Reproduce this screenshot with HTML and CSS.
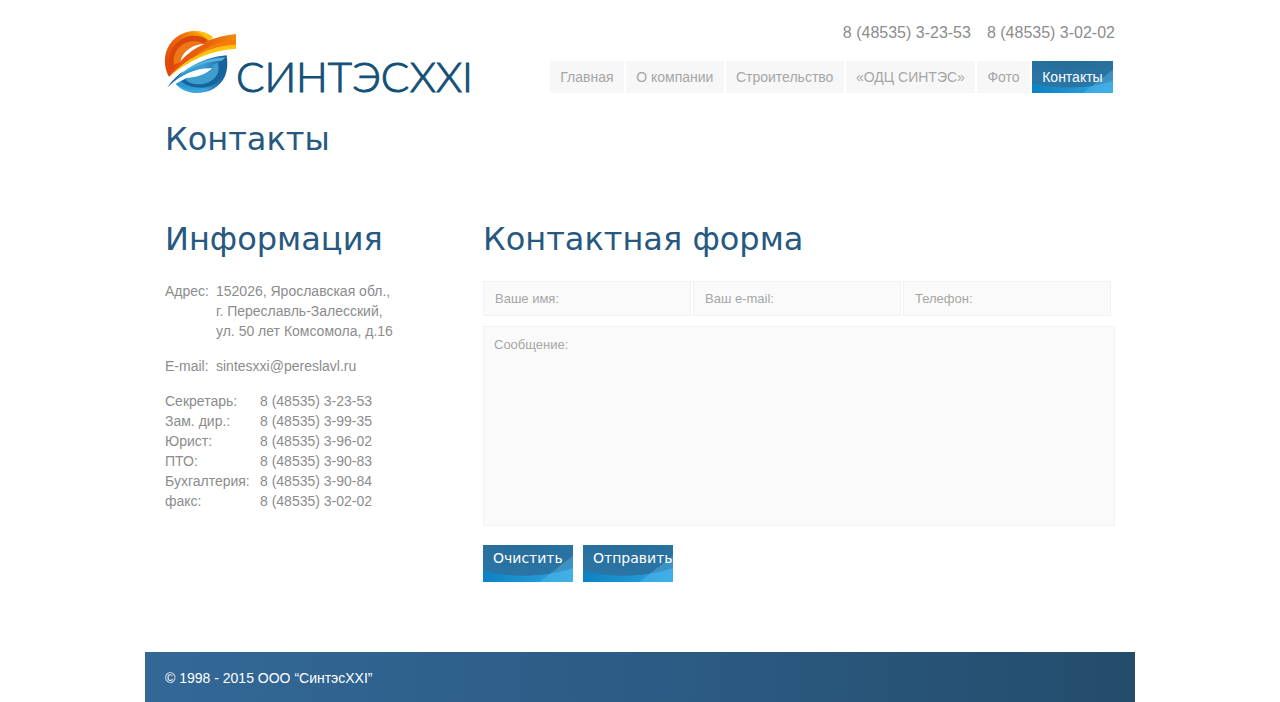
FILE: index.html
```html
<!DOCTYPE html>
<html lang="ru">
<head>
<meta charset="utf-8">
<meta name="viewport" content="width=device-width, initial-scale=1">
<title>СинтэсXXI — Контакты</title>
<link rel="stylesheet" href="styles.css">
</head>
<body>
<div class="page">
  <header class="header">
    <a class="logo" href="#" aria-label="СИНТЭС XXI">
      <svg width="306" height="62" viewBox="0 0 306 62">
        <defs>
          <linearGradient id="ring" x1="0" y1="1" x2="1" y2="0"><stop offset="0" stop-color="#e03c0c"/><stop offset=".6" stop-color="#ee6a0c"/><stop offset="1" stop-color="#ffc400"/></linearGradient>
          <linearGradient id="ribbon" x1="0" y1="0" x2="1" y2="0"><stop offset="0" stop-color="#e84e0c"/><stop offset=".6" stop-color="#e8650c"/><stop offset="1" stop-color="#f58a0c"/></linearGradient>
          <linearGradient id="water" x1="0" y1="0" x2="1" y2="0"><stop offset="0" stop-color="#2090d0"/><stop offset=".6" stop-color="#3a9fd4"/><stop offset="1" stop-color="#155a90"/></linearGradient>
        </defs>
        <g transform="translate(-5 -6) scale(.3333)">
          <path fill="url(#ring)" d="M27 155C4 112 15 62 50 36C84 11 130 13 159 37C149 47 140 53 130 58C100 59 72 75 60 112C55 128 40 144 27 155Z"/>
          <path fill="#d94808" d="M33 135C18 92 40 51 78 37C105 27 130 35 144 46L130 58C100 59 72 75 60 112Z"/>
          <path fill="#ef7616" d="M42 119C36 87 57 54 96 49C110 47 122 50 131 56C99 59 72 75 60 112Z"/>
          <path fill="#ffc20e" d="M105 18C126 18 145 25 159 37L148 46C137 36 123 25 105 18Z"/>
          <path fill="url(#ribbon)" d="M60 112C91 70 143 36 228 27L228 57C158 62 101 86 27 155C35 140 47 124 60 112Z"/>
          <path fill="#fff" d="M61 108C71 74 101 58 133 57C108 67 84 84 61 108Z"/>
          <path fill="#ffc40a" d="M228 57L228 71C150 76 87 106 27 155C88 93 155 63 228 57Z"/>
          <path fill="#f77d0a" d="M228 45L228 59C175 62 136 75 94 102C133 67 175 49 228 45Z"/>
          <g transform="scale(1 1.04)">
            <path fill="url(#water)" d="M22 180C73 120 137 92 200 87C207 133 195 164 162 183C126 203 78 199 47 170C58 163 69 158 81 153C101 152 133 147 157 125C114 123 67 139 22 180Z"/>
            <path fill="#17649c" d="M196 94C204 132 185 163 154 175C122 187 84 179 63 163L81 153C115 160 147 153 166 121L184 100Z"/>
            <path fill="#3d9dce" d="M173 108C184 139 163 164 128 170C108 173 88 169 76 157L81 153C111 153 139 149 157 125L157 116Z"/>
            <path fill="#55b2df" d="M83 128C119 105 159 95 197 93L185 103C151 104 109 114 62 143Z"/>
            <path fill="#164d80" d="M22 180C37 159 54 144 72 132C57 147 40 163 22 180Z"/>
            <path fill="#37a7df" d="M47 170C80 189 121 194 156 178C127 203 78 202 47 170Z"/>
          </g>
        </g>
        <text class="wordmark" x="71" y="61">СИНТЭС</text>
        <text class="wordmark" x="308" y="61" text-anchor="end">XXI</text>
      </svg>
    </a>
    <div class="header-side">
      <div class="phones"><span>8 (48535) 3-23-53</span><span>8 (48535) 3-02-02</span></div>
      <nav class="menu">
        <a href="#">Главная</a>
        <a href="#">О компании</a>
        <a href="#">Строительство</a>
        <a href="#">«ОДЦ СИНТЭС»</a>
        <a href="#">Фото</a>
        <a class="glossy" href="#" aria-current="page">Контакты</a>
      </nav>
    </div>
  </header>
  <main class="main">
    <h1>Контакты</h1>
    <div class="columns">
      <section class="info">
        <h2>Информация</h2>
        <table class="address">
          <tr><th scope="row">Адрес:</th><td>152026, Ярославская обл.,<br>г. Переславль-Залесский,<br>ул. 50 лет Комсомола, д.16</td></tr>
          <tr><th scope="row">E-mail:</th><td>sintesxxi@pereslavl.ru</td></tr>
        </table>
        <table class="staff">
          <tr><th scope="row">Секретарь:</th><td>8 (48535) 3-23-53</td></tr>
          <tr><th scope="row">Зам. дир.:</th><td>8 (48535) 3-99-35</td></tr>
          <tr><th scope="row">Юрист:</th><td>8 (48535) 3-96-02</td></tr>
          <tr><th scope="row">ПТО:</th><td>8 (48535) 3-90-83</td></tr>
          <tr><th scope="row">Бухгалтерия:</th><td>8 (48535) 3-90-84</td></tr>
          <tr><th scope="row">факс:</th><td>8 (48535) 3-02-02</td></tr>
        </table>
      </section>
      <section class="contact">
        <h2>Контактная форма</h2>
        <form>
          <div class="fields">
            <input type="text" aria-label="Ваше имя" placeholder="Ваше имя:">
            <input type="email" aria-label="Ваш e-mail" placeholder="Ваш e-mail:">
            <input type="tel" aria-label="Телефон" placeholder="Телефон:">
          </div>
          <textarea aria-label="Сообщение" placeholder="Сообщение:"></textarea>
          <div class="buttons">
            <button class="glossy" type="reset">Очистить</button>
            <button class="glossy" type="submit">Отправить</button>
          </div>
        </form>
      </section>
    </div>
  </main>
  <footer class="footer">© 1998 - 2015 ООО “СинтэсXXI”</footer>
</div>
</body>
</html>
```
FILE: styles.css
```css
* { box-sizing: border-box; }
body {
  margin: 0;
  background: #fff;
  color: #8c8c8c;
  font: 14px/20px "Liberation Sans", Arial, sans-serif;
}
.page {
  display: flex;
  flex-direction: column;
  max-width: 990px;
  min-height: 100vh;
  margin: 0 auto;
}
.header {
  display: flex;
  justify-content: space-between;
  align-items: flex-end;
  padding: 23px 20px 0;
}
.logo { display: block; }
.logo svg { display: block; overflow: visible; }
.wordmark {
  font: 300 42px Lato, "Open Sans", sans-serif;
  fill: #125078;
  stroke: #125078;
  stroke-width: 1px;
}
.header-side {
  display: flex;
  flex: 0 1 565px;
  flex-direction: column;
  gap: 18px;
}
.phones {
  display: flex;
  justify-content: flex-end;
  gap: 16px;
  font-size: 16px;
}
.menu {
  display: flex;
  gap: 2px;
  padding-right: 2px;
}
.menu a {
  flex: auto;
  padding: 6px 9px;
  background-color: #f7f7f7;
  color: #a6a6a6;
  text-align: center;
  text-decoration: none;
  white-space: nowrap;
}
.menu .glossy, .glossy {
  color: #fff;
  background:
    linear-gradient(142deg, transparent 75%, rgba(91, 190, 240, .4) 76%) no-repeat,
    radial-gradient(ellipse 90% 100% at 45% -16%, #266b98 0, #2b75a5 98%, transparent 100%) no-repeat,
    linear-gradient(90deg, #0d82c4, #30a5e2);
}
.main { flex: 1; padding: 22px 20px 70px; }
h1, h2 {
  margin: 0;
  color: #265880;
  font: 32px/48px "DejaVu Sans", sans-serif;
}
.columns {
  display: grid;
  grid-template-columns: 318px 1fr;
  margin-top: 52px;
}
h2 { margin-bottom: 18px; }
table { border-collapse: collapse; }
th, td {
  padding: 0;
  font-weight: normal;
  text-align: left;
  vertical-align: top;
}
.address th { width: 51px; }
.address td { padding-bottom: 15px; }
.staff th { width: 95px; }
.fields {
  display: grid;
  grid-template-columns: repeat(3, 1fr);
  gap: 2px;
  padding-right: 4px;
}
input, textarea {
  display: block;
  width: 100%;
  border: 1px solid #f2f2f2;
  border-radius: 0;
  background: #fafafa;
  color: #a6a6a6;
  font: 13px/15px "Liberation Sans", Arial, sans-serif;
}
input { height: 35px; padding: 0 11px; }
::placeholder { color: #a6a6a6; opacity: 1; }
textarea {
  height: 200px;
  margin-top: 10px;
  padding: 10px;
  resize: none;
}
.buttons {
  display: flex;
  gap: 10px;
  margin-top: 19px;
}
button {
  width: 90px;
  height: 37px;
  padding: 3px 0 14px 10px;
  border: 0;
  overflow: hidden;
  font: 14px/20px "DejaVu Sans", sans-serif;
  text-align: left;
  white-space: nowrap;
}
.footer {
  padding: 16px 20px 14px;
  background: linear-gradient(90deg, #336897, #2c5c85 50%, #244c6b);
  color: #fff;
}
```
